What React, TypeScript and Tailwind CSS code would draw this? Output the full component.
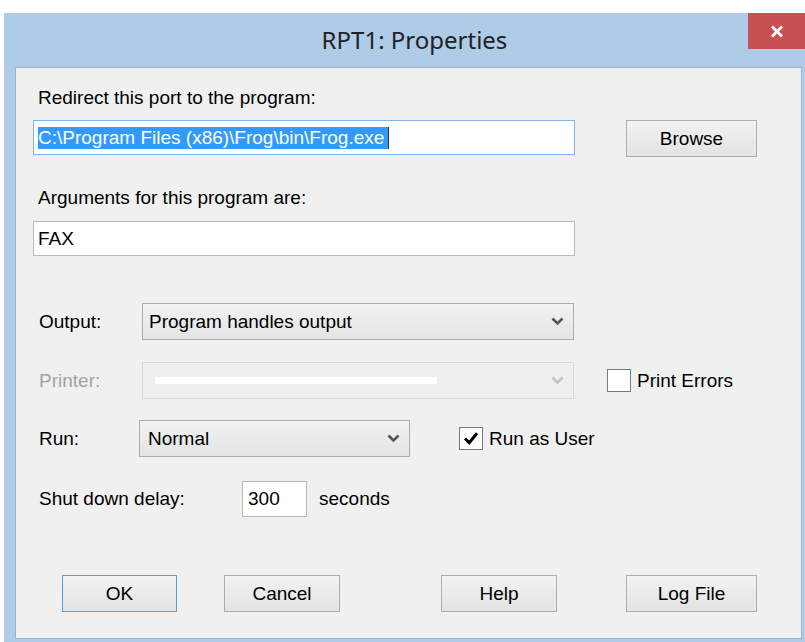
import React from "react";

const ui = { fontFamily: '"Liberation Sans", Arial, sans-serif' };

function Chevron({ disabled = false }: { disabled?: boolean }) {
  return (
    <svg width="13" height="9" viewBox="0 0 13 9" className="shrink-0">
      <path
        d="M1.5 1.5 L6.5 6.5 L11.5 1.5"
        fill="none"
        stroke={disabled ? "#c4c4c4" : "#555555"}
        strokeWidth="2.6"
      />
    </svg>
  );
}

function Button({ label, primary = false }: { label: string; primary?: boolean }) {
  return (
    <div
      className={
        "flex h-[37px] items-center justify-center border bg-gradient-to-b from-[#f2f2f2] to-[#e3e3e3] text-[19px] leading-[22px] text-black " +
        (primary ? "border-[#4f9ee8]" : "border-[#adadad]")
      }
    >
      {label}
    </div>
  );
}

function CheckBox({ checked }: { checked: boolean }) {
  return (
    <div className="flex h-[23px] w-[24px] shrink-0 items-center justify-center border border-[#7a7a7a] bg-white">
      {checked && (
        <svg width="16" height="15" viewBox="0 0 16 15">
          <path d="M2 7.5 L6.2 11.7 L14 2.3" fill="none" stroke="#000" strokeWidth="3" />
        </svg>
      )}
    </div>
  );
}

export default function App() {
  return (
    <div className="h-[642px] w-[805px] overflow-hidden bg-white pl-[4px] pt-[13px]" style={ui}>
      <div className="flex h-[629px] flex-col bg-[#aecbe8] pl-[11px] pr-[3px] pb-[3px]">
        {/* title bar */}
        <div className="relative flex h-[54px] shrink-0 items-center justify-center">
          <span
            className="ml-[12px] text-[24px] leading-[28px] text-[#222222]"
            style={{ fontFamily: '"Noto Sans", "Open Sans", sans-serif' }}
          >
            RPT1: Properties
          </span>
          <div className="absolute right-[-3px] top-0 flex h-[36px] w-[57px] items-center justify-center bg-[#c75050]">
            <svg width="14" height="13" viewBox="0 0 14 13">
              <path d="M2 1.5 L12 11.5 M12 1.5 L2 11.5" stroke="#fff" strokeWidth="2.8" />
            </svg>
          </div>
        </div>

        {/* client area */}
        <div className="flex flex-1 flex-col border border-[#98b3d0] bg-[#f0f0f0] pl-[17px] text-[19px] leading-[22px] text-black">
          <div className="ml-[5px] mt-[19px]">Redirect this port to the program:</div>

          <div className="mt-[11px] flex items-start">
            <div className="flex h-[35px] w-[542px] items-center border border-[#7eb4ea] bg-white pl-[4px]">
              <span className="bg-[#3399ff] pr-[4px] text-white">C:\Program Files (x86)\Frog\bin\Frog.exe</span>
              <span className="h-[22px] w-[1px] bg-[#4a2a10]" />
            </div>
            <div className="ml-[51px] w-[131px]">
              <Button label="Browse" />
            </div>
          </div>

          <div className="ml-[5px] mt-[30px]">Arguments for this program are:</div>
          <div className="mt-[12px] flex h-[35px] w-[542px] items-center border border-[#b8b8b8] bg-white pl-[4px]">
            FAX
          </div>

          {/* Output */}
          <div className="mt-[47px] flex items-center">
            <div className="ml-[6px] w-[103px]">Output:</div>
            <div className="flex h-[37px] w-[432px] items-center justify-between border border-[#acacac] bg-gradient-to-b from-[#f2f2f2] to-[#e4e4e4] pl-[6px] pr-[9px]">
              <span>Program handles output</span>
              <Chevron />
            </div>
          </div>

          {/* Printer */}
          <div className="mt-[22px] flex items-center">
            <div className="ml-[6px] w-[103px] text-[#a3a3a3]">Printer:</div>
            <div className="flex h-[37px] w-[432px] items-center justify-between border border-[#d9d9d9] bg-[#efefef] pl-[12px] pr-[9px]">
              <span className="h-[7px] w-[282px] bg-white" />
              <Chevron disabled />
            </div>
            <div className="ml-[33px] flex items-center">
              <CheckBox checked={false} />
              <span className="ml-[6px]">Print Errors</span>
            </div>
          </div>

          {/* Run */}
          <div className="mt-[21px] flex items-center">
            <div className="ml-[6px] w-[100px]">Run:</div>
            <div className="flex h-[37px] w-[271px] items-center justify-between border border-[#acacac] bg-gradient-to-b from-[#f2f2f2] to-[#e4e4e4] pl-[8px] pr-[9px]">
              <span>Normal</span>
              <Chevron />
            </div>
            <div className="ml-[49px] flex items-center">
              <CheckBox checked />
              <span className="ml-[6px]">Run as User</span>
            </div>
          </div>

          {/* Shut down delay */}
          <div className="mt-[24px] flex items-center">
            <div className="ml-[6px] w-[203px]">Shut down delay:</div>
            <div className="flex h-[36px] w-[65px] items-center border border-[#b8b8b8] bg-white pl-[5px]">300</div>
            <span className="ml-[12px]">seconds</span>
          </div>

          {/* buttons */}
          <div className="mt-[58px] flex items-center">
            <div className="ml-[29px] w-[115px]">
              <Button label="OK" primary />
            </div>
            <div className="ml-[47px] w-[116px]">
              <Button label="Cancel" />
            </div>
            <div className="ml-[101px] w-[116px]">
              <Button label="Help" />
            </div>
            <div className="ml-[69px] w-[131px]">
              <Button label="Log File" />
            </div>
          </div>
        </div>
      </div>
    </div>
  );
}
